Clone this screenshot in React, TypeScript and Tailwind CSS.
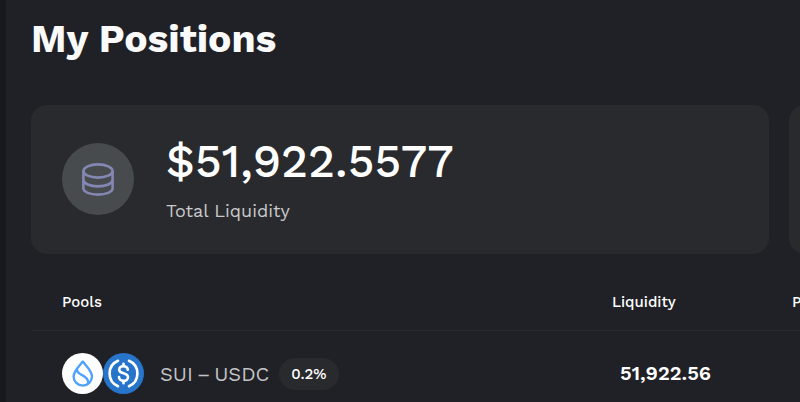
const positions = [{ base: "SUI", quote: "USDC", fee: "0.2%", liquidity: "51,922.56" }];

function DatabaseIcon() {
	return (
		<svg
			viewBox="0 0 32 33"
			className="h-[33px] w-8"
			fill="none"
			stroke="#8587b3"
			strokeWidth="2.6"
			aria-hidden="true"
		>
			<ellipse cx="16" cy="8" rx="14.6" ry="6.6" />
			<path d="M1.4 8v17.6c0 3.4 6.6 6 14.6 6s14.6-2.6 14.6-6V8" />
			<path d="M1.4 16.8c0 3.7 6.6 6.6 14.6 6.6s14.6-2.9 14.6-6.6" />
		</svg>
	);
}

function SuiLogo() {
	return (
		<svg viewBox="0 0 41 41" className="size-[41px]" fill="none" aria-hidden="true">
			<circle cx="20.5" cy="20.5" r="20.5" fill="#fff" />
			<g stroke="#4da2ff" strokeWidth="2.4" strokeLinejoin="round">
				<path d="M20.8 8.6c-4 5-9.2 9.6-9.2 14.8a9.2 9.2 0 0 0 18.4 0c0-5.2-5.2-9.8-9.2-14.8Z" />
				<path d="M15 15.8c-.6 3.2 1.4 4.6 4.6 6 4.4 2 6.8 4.2 6.8 8.6" />
			</g>
		</svg>
	);
}

function UsdcLogo() {
	return (
		<svg viewBox="0 0 41 41" className="size-[41px]" fill="none" aria-hidden="true">
			<circle cx="20.5" cy="20.5" r="20.5" fill="#2775ca" />
			<g stroke="#fff" strokeWidth="2.6" strokeLinecap="round">
				<path d="M15 7.8a13.8 13.8 0 0 0 0 25.4" />
				<path d="M26 7.8a13.8 13.8 0 0 1 0 25.4" />
				<path d="M24.8 16.8c0-2.2-1.800-3.600-4.300-3.600s-4.300 1.300-4.300 3.500c0 4.900 8.800 2.400 8.800 7.500 0 2.300-2 3.700-4.500 3.700s-4.500-1.500-4.500-3.800" />
				<path d="M20.5 10.8v2M20.5 28.3v2" />
			</g>
		</svg>
	);
}

export default function App() {
	return (
		<div className="min-h-screen overflow-hidden border-[#18191e] border-l-6 bg-[#202126] pl-[25px] font-['Work_Sans',Inter,sans-serif] text-white">
			<h1 className="pt-4 font-bold text-[39px] text-[#fafafa] leading-[46px]">
				My Positions
			</h1>

			<section className="mt-[43px] flex gap-5">
				<div className="flex w-24/25 shrink-0 items-center gap-8 rounded-2xl bg-[#292a2e] px-[31px] pt-7 pb-[29px]">
					<div className="flex size-[72px] shrink-0 items-center justify-center rounded-full bg-[#484b4e]">
						<DatabaseIcon />
					</div>
					<div>
						<p className="font-medium text-[46px] leading-[56px]">$51,922.5577</p>
						<p className="mt-2 text-[#c9c9cb] text-lg leading-7">Total Liquidity</p>
					</div>
				</div>
				<div className="w-24/25 shrink-0 rounded-2xl bg-[#292a2e]" />
			</section>

			<table className="mt-6 w-[194%] table-fixed text-left">
				<thead>
					<tr className="border-[#292a2e] border-b text-[15px] leading-6">
						<th className="w-[553px] pt-3 pb-4 pl-[31px] font-medium">Pools</th>
						<th className="w-[180px] pt-3 pb-4 pl-7 font-medium">Liquidity</th>
						<th className="pt-3 pb-4 pl-7 font-medium">Pending Yield</th>
					</tr>
				</thead>
				<tbody>
					{positions.map((position) => (
						<tr key={`${position.base}-${position.quote}`}>
							<td className="pt-[22px] pb-2 pl-[31px]">
								<div className="flex items-center">
									<SuiLogo />
									<UsdcLogo />
									<div className="ml-4 flex gap-1 text-[#c4c4c6] text-xl">
										<span>{position.base}</span>
										<span>–</span>
										<span>{position.quote}</span>
									</div>
									<span className="ml-2.5 rounded-full bg-[#292a2e] px-3 py-1 font-medium text-[15px] leading-6">
										{position.fee}
									</span>
								</div>
							</td>
							<td className="pt-5 pb-2 pl-9 font-semibold text-xl">
								{position.liquidity}
							</td>
							<td />
						</tr>
					))}
				</tbody>
			</table>
		</div>
	);
}
